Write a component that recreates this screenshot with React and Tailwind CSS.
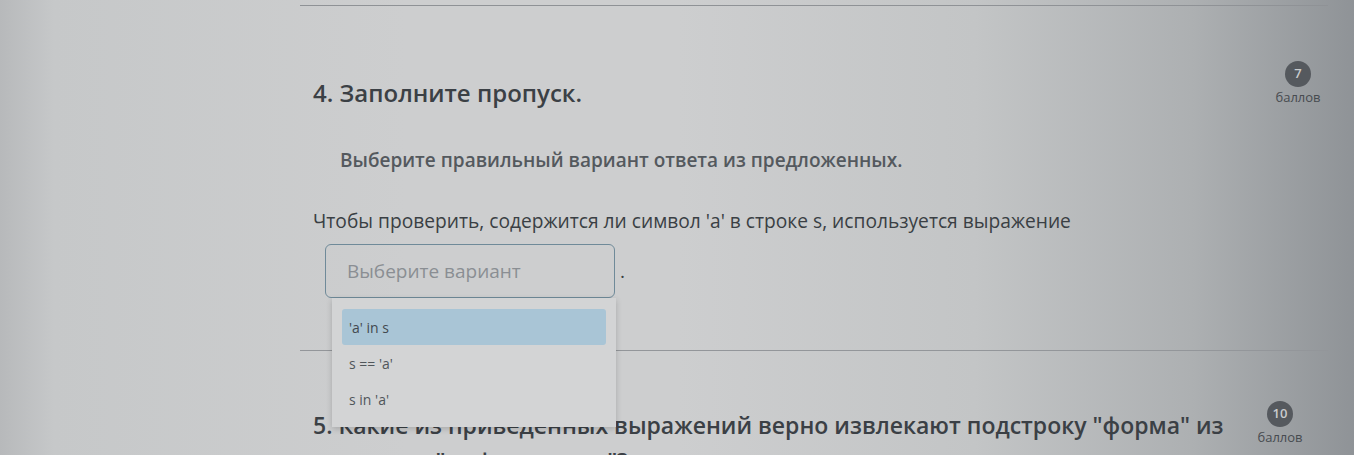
const options = ["'a' in s", "s == 'a'", "s in 'a'"]

function Points({ value, className = "" }) {
  return (
    <div className={`flex w-[60px] shrink-0 flex-col items-center ${className}`}>
      <span className="flex h-[26px] w-[26px] items-center justify-center rounded-full bg-[#55595e] text-[13px] font-semibold text-[#c9cbcd]">
        {value}
      </span>
      <span className="mt-[2px] text-[13px] leading-[16px] text-[#474b50]">баллов</span>
    </div>
  )
}

export default function App() {
  return (
    <div className="h-[455px] w-full overflow-hidden bg-[linear-gradient(to_right,#b7b9bb_0%,#c6c8c9_4%,#cdcecf_30%,#cdcecf_50%,#c3c5c6_72%,#adb0b2_88%,#8f9397_100%)] font-['Open_Sans',sans-serif]">
      <div className="ml-[300px] mr-[26px] mt-[5px] border-t border-[#8f9296]">
        {/* question 4 */}
        <div className="flex border-b border-[#93969a]">
          <div className="flex-1 pl-[13px] pt-[71px] pb-[52px]">
            <h2 className="text-[24px] font-semibold leading-[32px] text-[#3b4045]">4. Заполните пропуск.</h2>
            <p className="ml-[27px] mt-[38px] text-[19px] font-semibold leading-[26px] text-[#54595e]">
              Выберите правильный вариант ответа из предложенных.
            </p>
            <p className="mt-[35px] text-[19.2px] leading-[26px] text-[#3a3f44]">
              Чтобы проверить, содержится ли символ 'a' в строке s, используется выражение
            </p>
            <div className="ml-[12px] mt-[10px] flex items-center">
              <div className="relative">
                <div className="flex h-[54px] w-[290px] items-center rounded-[6px] border border-[#6f8a99] pl-[21px] text-[19px] text-[#8a8e93]">
                  Выберите вариант
                </div>
                <ul className="absolute left-[7px] top-[54px] z-10 w-[284px] bg-[#d3d4d5] px-[10px] pt-[11px] pb-[10px] shadow-[0_2px_6px_rgba(0,0,0,0.18)]">
                  {options.map((o, i) => (
                    <li
                      key={o}
                      className={`flex h-[36px] items-center rounded-[3px] px-[7px] text-[14px] ${
                        i === 0 ? "bg-[#a9c5d6] text-[#43494f]" : "text-[#50565b]"
                      }`}
                    >
                      {o}
                    </li>
                  ))}
                </ul>
              </div>
              <span className="ml-[5px] text-[19px] text-[#3a3f44]">.</span>
            </div>
          </div>
          <Points value="7" className="pt-[55px]" />
        </div>

        {/* question 5 */}
        <div className="flex">
          <div className="flex-1 pl-[13px] pt-[56px]">
            <h2 className="text-[23px] font-semibold leading-[36px] text-[#3b4045]">
              5. Какие из приведенных выражений верно извлекают подстроку "форма" из строки s = "информатика"?
            </h2>
          </div>
          <Points value="10" className="pt-[50px] pr-[18px] w-[78px]" />
        </div>
      </div>
    </div>
  )
}
